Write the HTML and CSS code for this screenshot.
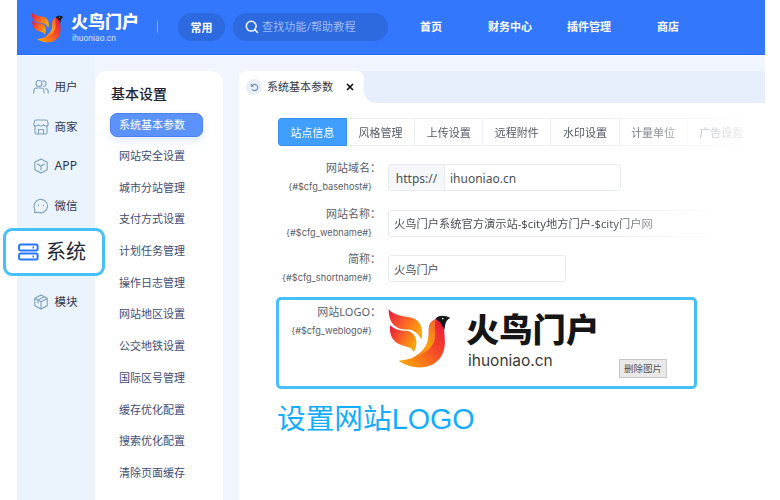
FILE: index.html
```html
<!DOCTYPE html>
<html lang="zh-CN">
<head>
<meta charset="utf-8">
<title>系统基本参数</title>
<link rel="stylesheet" href="styles.css">
</head>
<body>
<svg class="defs" width="0" height="0" aria-hidden="true">
  <defs>
    <linearGradient id="wing" x1="0" y1="0" x2="1" y2=".6"><stop offset="0" stop-color="#e9133d"/><stop offset=".45" stop-color="#f8562c"/><stop offset="1" stop-color="#fca409"/></linearGradient>
    <linearGradient id="body" x1="1" y1="0" x2=".1" y2="1"><stop offset="0" stop-color="#e9133d"/><stop offset=".45" stop-color="#f4472a"/><stop offset="1" stop-color="#fdaa05"/></linearGradient>
    <linearGradient id="breast" x1=".8" y1="0" x2="0" y2="1"><stop offset="0" stop-color="#f56b24"/><stop offset=".5" stop-color="#fba00d"/><stop offset="1" stop-color="#f7801a"/></linearGradient>
    <symbol id="bird" viewBox="355 55 190 182">
      <path fill="url(#wing)" d="M357 58C374 78 401 78 424 83C450 89 463 112 456 149C448 133 436 122 418 119C410 118 402 119 394 117C370 112 357 91 357 58Z"/>
      <path fill="url(#wing)" d="M361 106C376 120 394 123 412 123C438 127 450 158 433 187C427 169 405 172 383 160C366 150 359 130 361 106Z"/>
      <path fill="url(#body)" d="M500 87C515 93 522 103 524 120C527 147 530 174 517 197C496 236 435 247 387 213C417 212 439 202 454 190C477 171 478 145 478 129C477 107 481 94 500 87Z"/>
      <path fill="url(#breast)" d="M500 87C481 94 477 110 478 129C479 163 461 186 432 203C473 192 499 167 498 131C498 113 494 103 500 87Z"/>
      <path class="bird-head" d="M498 87C506 75 526 75 543 84C530 90 528 99 525 122C519 105 511 92 498 87Z"/>
      <circle cx="520" cy="86" r="2.5" fill="#fff"/>
    </symbol>
  </defs>
</svg>
<div class="app">
  <header class="topbar">
    <svg class="brand-bird"><use href="#bird"/></svg>
    <div class="brand"><strong>火鸟门户</strong><span>ihuoniao.cn</span></div>
    <i class="divider"></i>
    <span class="pill">常用</span>
    <div class="search"><svg viewBox="0 0 14 14"><circle cx="6.2" cy="6.2" r="4.9"/><path d="M9.8 9.8L12.5 12.5"/></svg>查找功能/帮助教程</div>
    <nav class="nav"><span>首页</span><span>财务中心</span><span>插件管理</span><span>商店</span></nav>
  </header>
  <main class="main">
    <aside class="sidebar">
      <div class="side-item"><svg viewBox="0 0 16 16"><circle cx="6" cy="4.500" r="3"/><path d="M.8 14v-2q0-3 3-3h4q3.200 0 3.200 3v2M10 1.700q3 .3 3 2.800t-2.500 3M12.500 9.500q2.700.5 2.700 3V14"/></svg>用户</div>
      <div class="side-item"><svg viewBox="0 0 16 16"><path d="M3 1h10q1.200 0 1.500 1.300L15.200 5q0 2-2 2T10.500 5.500Q10.300 7 8 7T5.500 5.500Q5.300 7 3 7T.8 5l.7-2.700Q1.800 1 3 1ZM2 7.500v6Q2 15 3.500 15h9q1.500 0 1.500-1.500v-6M5.500 15v-4.500h5V15"/></svg>商家</div>
      <div class="side-item latin"><svg viewBox="0 0 16 16"><path d="M8 .9l6.200 3.400v7.400L8 15.100l-6.200-3.400V4.300ZM4.500 6L8 8l3.500-2M8 8v4"/></svg>APP</div>
      <div class="side-item"><svg viewBox="0 0 16 16"><path d="M1.600 14.600l.4-3.100A6.700 6.700 0 1 1 5 14.200ZM5.500 7v.6M10.500 7v.6"/></svg>微信</div>
      <div class="side-current"><svg viewBox="0 0 22 18"><rect x="1.100" y="1.500" width="18.500" height="6" rx="1.500"/><rect x="1.100" y="10.500" width="18.500" height="6" rx="1.500"/><path d="M14.500 4.500h1.500M14.500 13.500h1.500"/></svg>系统</div>
      <div class="side-item"><svg viewBox="0 0 16 16"><path d="M8 .9l6.200 3.400v7.400L8 15.100l-6.200-3.400V4.300ZM2 4.500l6 3.200 6-3.200M8 7.700V15M11 2.700L5 6v3"/></svg>模块</div>
    </aside>
    <section class="submenu">
      <h2>基本设置</h2>
      <div class="sub active">系统基本参数</div>
      <div class="sub">网站安全设置</div><div class="sub">城市分站管理</div><div class="sub">支付方式设置</div><div class="sub">计划任务管理</div><div class="sub">操作日志管理</div><div class="sub">网站地区设置</div><div class="sub">公交地铁设置</div><div class="sub">国际区号管理</div><div class="sub">缓存优化配置</div><div class="sub">搜索优化配置</div><div class="sub">清除页面缓存</div>
    </section>
    <section class="content">
      <div class="page-tabs">
        <div class="page-tab"><span class="refresh"><svg viewBox="0 0 10 10"><path d="M1.500 1v2.500H4M2 3.300Q4 .8 6.700 1.800Q9 3 8.500 5.700Q7.700 8.500 5 8.500Q3 8.500 2 7"/></svg></span>系统基本参数<svg class="close" viewBox="0 0 8 8"><path d="M1 1l6 6M7 1L1 7"/></svg></div>
        <div class="tab-rest"></div>
      </div>
      <div class="tabs"><span class="on">站点信息</span><span>风格管理</span><span>上传设置</span><span>远程附件</span><span>水印设置</span><span>计量单位</span><span>广告设置</span></div>
      <div class="row"><div class="label">网站域名：<small>{#$cfg_basehost#}</small></div><div class="input domain"><b>https://</b><span>ihuoniao.cn</span></div></div>
      <div class="row"><div class="label">网站名称：<small>{#$cfg_webname#}</small></div><div class="input name"><span>火鸟门户系统官方演示站-$city地方门户-$city门户网</span></div></div>
      <div class="row"><div class="label">简称：<small>{#$cfg_shortname#}</small></div><div class="input short"><span>火鸟门户</span></div></div>
      <div class="logo-row">
        <div class="label">网站LOGO：<small>{#$cfg_weblogo#}</small></div>
        <svg class="logo-bird"><use href="#bird"/></svg>
        <div class="logo-text"><strong>火鸟门户</strong><span>ihuoniao.cn</span></div>
        <button>删除图片</button>
      </div>
      <div class="caption">设置网站LOGO</div>
    </section>
  </main>
</div>
</body>
</html>
```
FILE: styles.css
```css
* { box-sizing: border-box; }
body { margin: 0; width: 780px; height: 500px; overflow: hidden; background: #fff; font: 11px/16px "Noto Sans", "Noto Sans CJK SC", sans-serif; color: #555b66; }
svg { flex: none; }
.defs { display: block; }
.app { width: 748px; height: 500px; margin-left: 17px; white-space: nowrap; }
.topbar { height: 55px; background: #3377fc; border-bottom: 1px solid #2469ef; display: flex; align-items: center; color: #fff; }
.brand-bird { width: 33px; height: 31px; margin-left: 14px; }
.bird-head { fill: #151719; }
.brand { width: 69px; margin-left: 7px; }
.brand strong { display: block; margin-top: -3px; font: 900 17px/25px "Noto Sans CJK SC", sans-serif; }
.brand span { display: block; padding-left: 1px; font: 8.500px/10px Roboto, sans-serif; color: #d5e4ff; }
.divider { width: 1px; height: 12px; margin-left: 17px; background: #82aefd; }
.pill { width: 47px; height: 28px; margin-left: 20px; border-radius: 14px; background: #2d69df; font-weight: 700; line-height: 29px; text-align: center; }
.search { display: flex; align-items: center; width: 155px; height: 28px; margin-left: 8px; padding-left: 12px; border-radius: 14px; background: #2d69df; color: #9dbdf8; letter-spacing: .17px; }
.search svg { width: 14px; height: 14px; margin-right: 3px; fill: none; stroke: #fff; stroke-width: 1.5; stroke-linecap: round; }
.nav { display: flex; margin-left: 32px; font-weight: 700; }
.nav span:nth-child(2) { margin-left: 46px; }
.nav span:nth-child(3) { margin-left: 35px; }
.nav span:nth-child(4) { margin-left: 46px; }
.main { display: flex; height: 445px; background: #f1f6fe; border-top: 1px solid #f8fbff; }
.sidebar { width: 78px; background: #ebf3fc; padding-top: 11px; }
.side-item { display: flex; align-items: center; height: 39.7px; padding-left: 16px; gap: 5.500px; font-size: 11.500px; color: #30374b; }
.side-item.latin { font-size: 12.200px; }
.side-item svg { width: 16px; height: 16px; fill: none; stroke: #7ba1bd; stroke-width: 1.1; stroke-linejoin: round; stroke-linecap: round; }
.side-current { position: relative; display: flex; align-items: center; width: 102px; height: 48px; margin: 2px 0 6px -14px; padding-left: 12px; border: 3px solid #46bffd; border-radius: 9px; background: #fff; font-size: 20px; line-height: 28px; color: #222635; }
.side-current svg { width: 22px; height: 18px; margin-right: 6px; fill: none; stroke: #2876fb; stroke-width: 2; }
.submenu { width: 128px; margin-top: 15px; padding: 14px 15px 0; border-radius: 12px 12px 0 0; background: #fff; }
.submenu h2 { margin: 0 0 10px 1px; font-size: 14px; line-height: 18px; font-weight: 500; color: #202231; }
.sub { height: 31.7px; padding-left: 9px; line-height: 31.7px; color: #414c73; }
.sub.active { width: 93px; height: 24px; margin: 0 0 3px; padding-left: 8px; border: 1px solid #4b83ee; border-radius: 7px; background: #5b92fb; box-shadow: 0 4px 9px #5b92fb30; color: #fff; line-height: 22px; }
.content { width: 526px; margin: 15px 0 0 16px; border-radius: 8px 0 0; background: #fff; overflow: hidden; }
.page-tabs { display: flex; height: 32px; background: linear-gradient(90deg, #f1f6fe 125px, #fff 125px); }
.page-tab { position: relative; z-index: 1; display: flex; align-items: center; width: 125px; background: #fff; border-radius: 8px 7px 0 0; padding-left: 7px; color: #30374b; }
.refresh { display: grid; place-items: center; width: 16px; height: 16px; margin-right: 5px; border-radius: 50%; background: #e9eff6; }
.refresh svg { width: 9px; height: 9px; fill: none; stroke: #7192ad; stroke-width: 1.2; }
.close { width: 8px; height: 8px; margin-left: 13px; stroke: #111; stroke-width: 1.7; }
.tab-rest { flex: 1; border-radius: 0 0 0 12px; background: #e7eefc; box-shadow: -7px -20px 0 #e7eefc; }
.tabs { display: flex; width: 477px; height: 28px; margin: 15px 0 14px 39px; border: 1px solid #eceff4; border-right: 0; line-height: 28px; text-align: center; border-radius: 3px 0 0 3px; -webkit-mask-image: linear-gradient(90deg, #000 68%, transparent 101%); mask-image: linear-gradient(90deg, #000 68%, transparent 101%); }
.tabs span { width: 68.150px; border-right: 1px solid #eceff4; flex: none; }
.tabs .on { margin: -1px 0 -1px -1px; width: 69px; border: 1px solid #3592ed; border-radius: 3px 0 0 3px; background: #409eff; color: #fff; }
.row { display: flex; height: 45.5px; }
.label { width: 142px; text-align: right; line-height: 16px; color: #5b6068; flex: none; }
.label small { display: block; margin-top: 1px; padding-right: 9px; font: 9.200px/19px Inter, sans-serif; }
.input { display: flex; align-items: center; height: 27px; margin: 4px 0 0 7px; border: 1px solid #e8ebf0; border-radius: 3px; background: #fff; color: #4b5057; }
.input span { padding: 2px 0 0 5px; }
.domain { width: 233px; font-size: 12px; }
.domain b { width: 56px; height: 25px; border-right: 1px solid #e8ebf0; background: #f5f7fa; font-weight: 400; line-height: 27px; text-align: center; }
.name { width: 370px; font-size: 11.250px; border-right: 0; -webkit-mask-image: linear-gradient(90deg, #000 58%, transparent 90%); mask-image: linear-gradient(90deg, #000 58%, transparent 90%); }
.short { width: 178px; font-size: 11.200px; }
.logo-row { display: flex; width: 421px; height: 92px; margin: 0 0 0 37px; border: 3px solid #46bffd; border-radius: 5px; }
.logo-row .label { width: 102px; padding-top: 4px; }
.logo-bird { width: 63px; height: 61px; margin: 8px 0 0 7px; }
.logo-text { width: 134px; margin: 3px 0 0 15px; color: #151515; }
.logo-text strong { display: block; font: 900 33.300px/49px "Noto Sans CJK SC", sans-serif; }
.logo-text span { display: block; padding-left: 2px; font: 15.500px/18px Inter, sans-serif; color: #393939; }
.logo-row button { width: 48px; height: 19px; margin: 59px 0 0 19px; padding: 0; border: 1px solid #c9c9c9; background: #e9e9e9; color: #555; font: 9.500px/16px "Noto Sans CJK SC", sans-serif; }
.caption { margin: 10px 0 0 38px; color: #13acff; font: 28.700px/40px "Liberation Sans", "Noto Sans CJK SC", sans-serif; }
```
